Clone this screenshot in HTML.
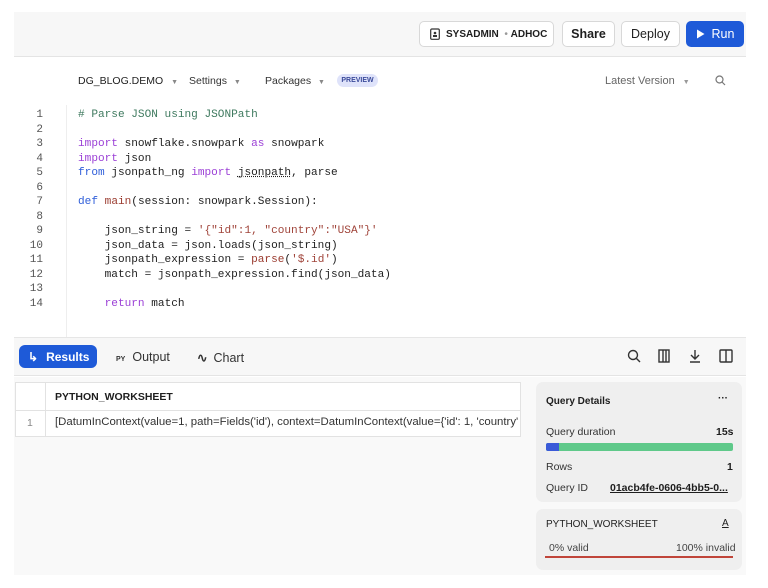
<!DOCTYPE html>
<html><head><style>
*{margin:0;padding:0;box-sizing:border-box}
body{width:768px;height:588px;background:#fff;font-family:"Liberation Sans",sans-serif;position:relative;overflow:hidden;color:#1e1e1e}
.a{position:absolute}
.hdr{left:14px;top:12px;width:732px;height:45px;background:#f7f7f7;border-bottom:1px solid #e4e4e4}
.btn{position:absolute;top:21px;height:26px;border:1px solid #d8d8d8;border-radius:5px;background:#fff;font-size:12.5px;display:flex;align-items:center;justify-content:center}
.tb{font-size:10.5px;color:#333;top:75px}
.code{font-family:"Liberation Mono",monospace;font-size:11.1px;line-height:14.5px;white-space:pre;color:#1e1e1e}
.ln{font-family:"Liberation Mono",monospace;font-size:11px;line-height:14.5px;text-align:right;color:#555;white-space:pre}
.k{color:#9b3fd6}.b{color:#2f5ed9}.c{color:#3f7a5f}.s{color:#a0443a}.f{color:#9a3a2e}
.card{background:#efefef;border-radius:7px}
</style></head><body>
<div class="a hdr"></div>
<div class="btn" style="left:419px;width:135px;font-size:10px;font-weight:bold;justify-content:flex-start;padding-left:10px">
<svg width="10" height="12" viewBox="0 0 10 12" style="margin-right:6px"><rect x="0.7" y="1" width="8.6" height="10.3" rx="1.2" fill="none" stroke="#333" stroke-width="1.2"/><circle cx="5" cy="5" r="1.3" fill="#333"/><rect x="3" y="7" width="4" height="2" fill="#333"/></svg>SYSADMIN&nbsp;&nbsp;<span style="color:#999;font-weight:normal">•</span>&nbsp;ADHOC</div>
<div class="btn" style="left:562px;width:53px;font-weight:bold">Share</div>
<div class="btn" style="left:621px;width:59px">Deploy</div>
<div class="btn" style="left:686px;width:58px;background:#1e5ad8;border-color:#1e5ad8;color:#fff"><svg width="9" height="10" style="margin-right:7px"><path d="M1 0.5L8.5 5L1 9.5Z" fill="#fff"/></svg>Run</div>

<div class="a tb" style="left:78px;color:#222">DG_BLOG.DEMO <span style="color:#888;font-size:7px;margin-left:5px">▼</span></div>
<div class="a tb" style="left:189px">Settings <span style="color:#888;font-size:7px;margin-left:4px">▼</span></div>
<div class="a tb" style="left:265px">Packages <span style="color:#888;font-size:7px;margin-left:4px">▼</span></div>
<div class="a" style="left:337px;top:74px;width:41px;height:13px;border-radius:7px;background:#dfe3fa;color:#3a4a9a;font-size:7px;font-weight:bold;text-align:center;line-height:13px">PREVIEW</div>
<div class="a tb" style="left:605px;color:#666;font-size:11px">Latest Version <span style="color:#999;font-size:7px;margin-left:5px">▼</span></div>
<svg class="a" style="left:715px;top:75px" width="11" height="11"><circle cx="4.5" cy="4.5" r="3.5" fill="none" stroke="#777" stroke-width="1.2"/><path d="M7 7L10 10" stroke="#777" stroke-width="1.2"/></svg>

<div class="a" style="left:66px;top:105px;width:1px;height:232px;background:#eee"></div>
<div class="a ln" style="left:20px;top:108px;width:23px">1
2
3
4
5
6
7
8
9
10
11
12
13
14</div>
<div class="a code" style="left:78px;top:108px"><span class="c"># Parse JSON using JSONPath</span>

<span class="k">import</span> snowflake.snowpark <span class="k">as</span> snowpark
<span class="k">import</span> json
<span class="b">from</span> jsonpath_ng <span class="k">import</span> <span style="text-decoration:underline dotted">jsonpath</span>, parse

<span class="b">def</span> <span class="f">main</span>(session: snowpark.Session):

    json_string = <span class="s">'{"id":1, "country":"USA"}'</span>
    json_data = json.loads(json_string)
    jsonpath_expression = <span class="f">parse</span>(<span class="s">'$.id'</span>)
    match = jsonpath_expression.find(json_data)

    <span class="k">return</span> match</div>

<div class="a" style="left:14px;top:337px;width:732px;height:39px;background:#f7f7f7;border-top:1px solid #e6e6e6;border-bottom:1px solid #e4e4e4"></div>
<div class="a" style="left:19px;top:345px;width:78px;height:23px;background:#1e5ad8;border-radius:6px;color:#fff;font-size:12px;font-weight:bold;display:flex;align-items:center;padding-left:9px"><span style="margin-right:8px">↳</span>Results</div>
<div class="a" style="left:116px;top:350px;font-size:12.5px;color:#333"><span style="font-size:7px;font-weight:bold;margin-right:7px">PY</span>Output</div>
<div class="a" style="left:197px;top:350px;font-size:12.5px;color:#333"><span style="font-weight:bold;margin-right:6px">∿</span>Chart</div>
<svg class="a" style="left:627px;top:349px" width="110" height="14" fill="none" stroke="#333" stroke-width="1.4">
<circle cx="6" cy="6" r="4.5"/><path d="M9.5 9.5L13 13"/>
<rect x="32" y="1" width="10" height="12"/><path d="M36 1V13M39 1V13"/>
<path d="M68 1V10M64 6L68 10L72 6M63 13H73"/>
<rect x="93" y="1" width="12" height="12" rx="1"/><path d="M99 1V13"/>
</svg>

<div class="a" style="left:14px;top:377px;width:732px;height:198px;background:#f9f9f9"></div>
<div class="a" style="left:15px;top:382px;width:506px;height:55px;background:#fff;border:1px solid #e2e2e2"></div>
<div class="a" style="left:45px;top:382px;width:1px;height:55px;background:#e2e2e2"></div>
<div class="a" style="left:15px;top:410px;width:506px;height:1px;background:#e2e2e2"></div>
<div class="a" style="left:55px;top:391px;font-size:10.5px;font-weight:bold">PYTHON_WORKSHEET</div>
<div class="a" style="left:27px;top:417px;font-size:10.5px;color:#888">1</div>
<div class="a" style="left:55px;top:416px;font-size:11.4px;color:#333;white-space:nowrap;width:463px;overflow:hidden">[DatumInContext(value=1, path=Fields('id'), context=DatumInContext(value={'id': 1, 'country':</div>

<div class="a card" style="left:536px;top:382px;width:206px;height:120px"></div>
<div class="a" style="left:546px;top:396px;font-size:10px;font-weight:bold">Query Details</div>
<div class="a" style="left:718px;top:393px;font-size:10px;font-weight:bold">···</div>
<div class="a" style="left:546px;top:426px;font-size:10.5px;color:#333">Query duration</div>
<div class="a" style="left:716px;top:426px;font-size:10.5px;font-weight:bold">15s</div>
<div class="a" style="left:546px;top:443px;width:187px;height:8px;background:#5fc98a;border-radius:2px"></div>
<div class="a" style="left:546px;top:443px;width:13px;height:8px;background:#3a5ad8;border-radius:2px 0 0 2px"></div>
<div class="a" style="left:546px;top:461px;font-size:10.5px;color:#333">Rows</div>
<div class="a" style="left:727px;top:461px;font-size:10.5px;font-weight:bold">1</div>
<div class="a" style="left:546px;top:482px;font-size:10.5px;color:#333">Query ID</div>
<div class="a" style="left:610px;top:482px;font-size:10.5px;font-weight:bold;text-decoration:underline;white-space:nowrap">01acb4fe-0606-4bb5-0...</div>

<div class="a card" style="left:536px;top:509px;width:206px;height:61px"></div>
<div class="a" style="left:546px;top:519px;font-size:10px;color:#222">PYTHON_WORKSHEET</div>
<div class="a" style="left:722px;top:518px;font-size:10px;text-decoration:underline">A</div>
<div class="a" style="left:549px;top:542px;font-size:10.5px;color:#444">0% valid</div>
<div class="a" style="left:676px;top:542px;font-size:10.5px;color:#444">100% invalid</div>
<div class="a" style="left:545px;top:556px;width:188px;height:2px;background:#c0453a"></div>
</body></html>
